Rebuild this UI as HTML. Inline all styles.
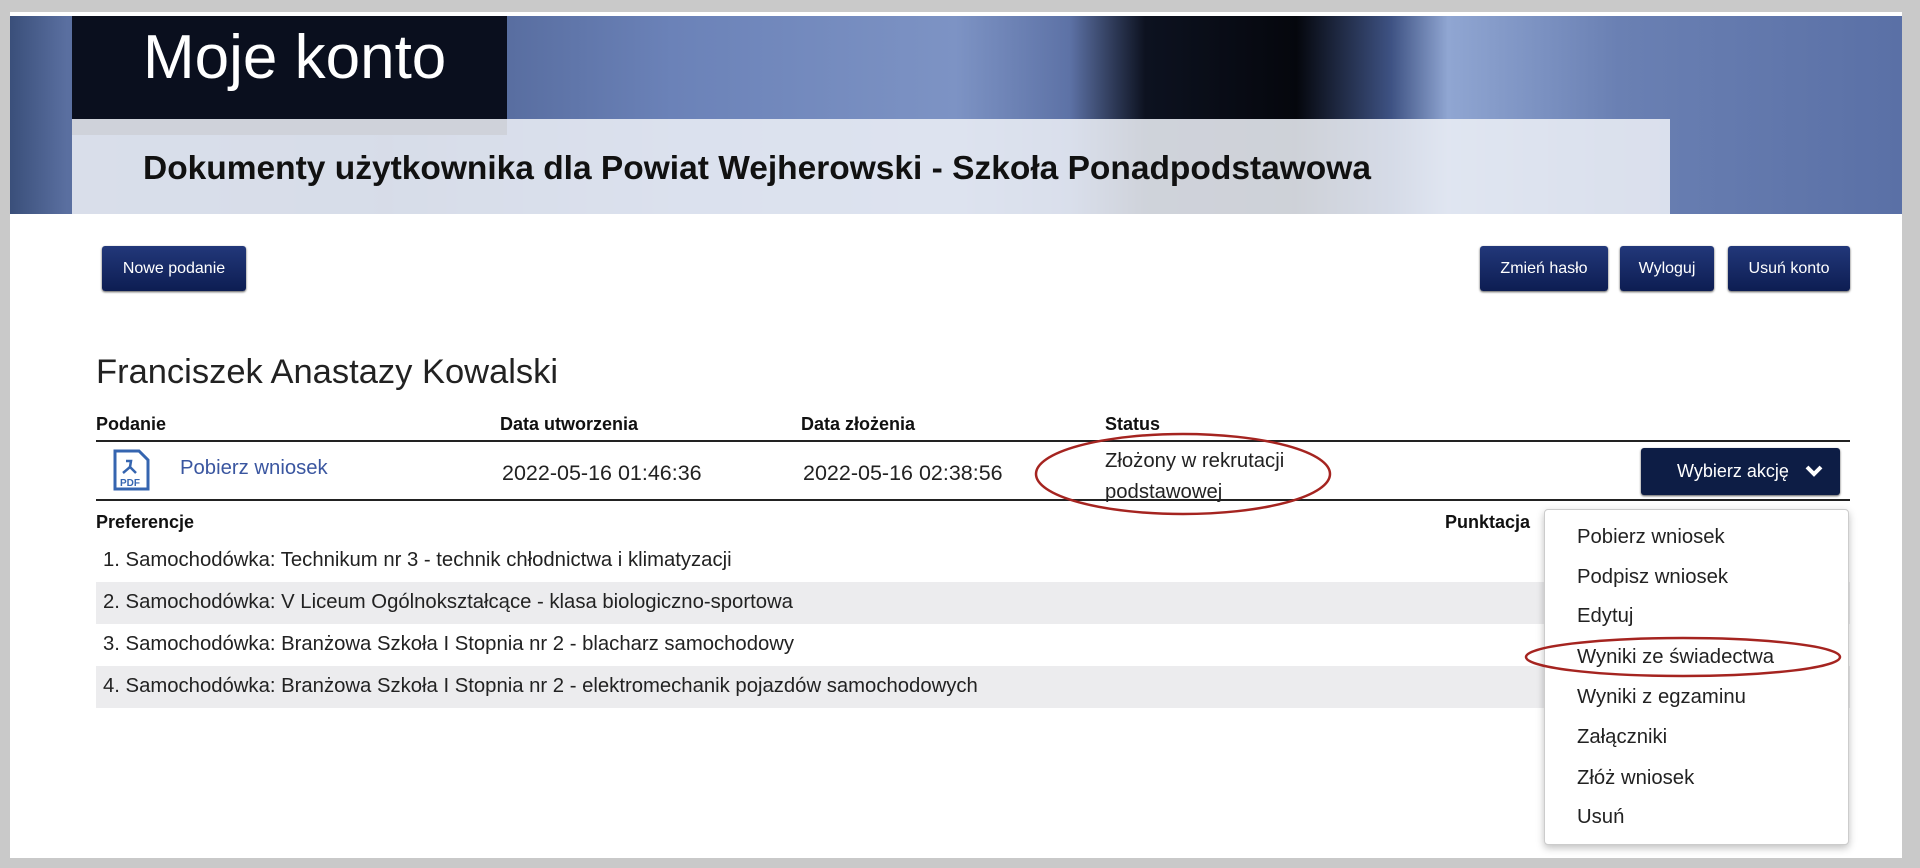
<!DOCTYPE html>
<html><head><meta charset="utf-8"><style>
*{margin:0;padding:0;box-sizing:border-box}
body{width:1920px;height:868px;background:#c9c9c9;font-family:"Liberation Sans",sans-serif;position:relative;overflow:hidden}
.abs{position:absolute}
#page{left:10px;top:12px;width:1892px;height:846px;background:#fff}
#hdr{left:10px;top:16px;width:1892px;height:198px;background:linear-gradient(90deg,#3a4f7a 0%,#5a6fa0 3%,#4b5f8f 20%,#6b82b8 35%,#7d93c4 50%,#5d72a6 56%,#0d1220 60%,#05070d 68%,#3e5283 73%,#90a6d2 76%,#6a80b3 85%,#5a70a6 100%)}
#dark{left:72px;top:16px;width:435px;height:119px;background:#0a0f1e}
#dark span{position:absolute;left:71px;top:6px;color:#fff;font-size:62px}
#light{left:72px;top:119px;width:1598px;height:95px;background:rgba(235,238,245,.88)}
#light span{position:absolute;left:71px;top:31px;font-size:33.5px;font-weight:bold;color:#111}
.btn{position:absolute;background:linear-gradient(#22387a,#0d1d52);color:#fff;font-size:16px;border-radius:3px;display:flex;align-items:center;justify-content:center;box-shadow:0 1px 2px #555}
.t{position:absolute;font-size:20.3px;color:#222;white-space:nowrap}
.b{font-weight:bold;font-size:18px;color:#111}
.line{position:absolute;left:96px;width:1754px;height:2px;background:#222}
.row{position:absolute;left:96px;width:1754px;height:42px}
.g{background:#ececee}
#dd{left:1544px;top:509px;width:305px;height:336px;background:#fff;border:1px solid #ccc;border-radius:4px;box-shadow:0 3px 8px rgba(0,0,0,.25)}
#dd div{position:absolute;left:32px;font-size:20.3px;color:#222}
</style></head><body>
<div id="page" class="abs"></div>
<div id="hdr" class="abs"></div>
<div id="dark" class="abs"><span>Moje konto</span></div>
<div id="light" class="abs"><span>Dokumenty użytkownika dla Powiat Wejherowski - Szkoła Ponadpodstawowa</span></div>
<div class="btn" style="left:102px;top:246px;width:144px;height:45px">Nowe podanie</div>
<div class="btn" style="left:1480px;top:246px;width:128px;height:45px">Zmień hasło</div>
<div class="btn" style="left:1620px;top:246px;width:94px;height:45px">Wyloguj</div>
<div class="btn" style="left:1728px;top:246px;width:122px;height:45px">Usuń konto</div>
<div class="t" style="left:96px;top:353px;font-size:34.5px;color:#222">Franciszek Anastazy Kowalski</div>
<div class="t b" style="left:96px;top:414px">Podanie</div>
<div class="t b" style="left:500px;top:414px">Data utworzenia</div>
<div class="t b" style="left:801px;top:414px">Data złożenia</div>
<div class="t b" style="left:1105px;top:414px">Status</div>
<div class="line" style="top:440px"></div>
<svg class="abs" style="left:113px;top:449px" width="38" height="42" viewBox="0 0 38 42"><path d="M2 2h24l9 9v29H2z" fill="#fff" stroke="#3565b0" stroke-width="3"/><path d="M13 12l5 0-1 6 6 6M17 18l-7 6" fill="none" stroke="#3565b0" stroke-width="2.5"/><text x="7" y="37" font-size="10" font-weight="bold" fill="#3565b0" font-family="Liberation Sans">PDF</text></svg>
<div class="t" style="left:180px;top:457px;color:#3a56a0">Pobierz wniosek</div>
<div class="t" style="left:502px;top:461px;font-size:21.5px">2022-05-16 01:46:36</div>
<div class="t" style="left:803px;top:461px;font-size:21.5px">2022-05-16 02:38:56</div>
<div class="t" style="left:1105px;top:446px;line-height:31px">Złożony w rekrutacji<br>podstawowej</div>
<div class="btn" style="left:1641px;top:448px;width:199px;height:47px;background:#0d1d45;font-size:18px;justify-content:flex-start;padding-left:36px">Wybierz akcję<svg style="position:absolute;left:164px;top:17px" width="18" height="13" viewBox="0 0 18 13"><path d="M2 2l7 7 7-7" fill="none" stroke="#fff" stroke-width="4"/></svg></div>
<div class="line" style="top:499px"></div>
<div class="t b" style="left:96px;top:512px">Preferencje</div>
<div class="t b" style="left:1445px;top:512px">Punktacja</div>
<div class="row" style="top:540px"></div>
<div class="row g" style="top:582px"></div>
<div class="row" style="top:624px"></div>
<div class="row g" style="top:666px"></div>
<div class="t" style="left:103px;top:549px">1. Samochodówka: Technikum nr 3 - technik chłodnictwa i klimatyzacji</div>
<div class="t" style="left:103px;top:591px">2. Samochodówka: V Liceum Ogólnokształcące - klasa biologiczno-sportowa</div>
<div class="t" style="left:103px;top:633px">3. Samochodówka: Branżowa Szkoła I Stopnia nr 2 - blacharz samochodowy</div>
<div class="t" style="left:103px;top:675px">4. Samochodówka: Branżowa Szkoła I Stopnia nr 2 - elektromechanik pojazdów samochodowych</div>
<div id="dd" class="abs">
<div style="top:16px">Pobierz wniosek</div>
<div style="top:56px">Podpisz wniosek</div>
<div style="top:95px">Edytuj</div>
<div style="top:136px">Wyniki ze świadectwa</div>
<div style="top:176px">Wyniki z egzaminu</div>
<div style="top:216px">Załączniki</div>
<div style="top:257px">Złóż wniosek</div>
<div style="top:296px">Usuń</div>
</div>
<svg class="abs" style="left:0;top:0" width="1920" height="868"><ellipse cx="1183" cy="474" rx="147" ry="40" fill="none" stroke="#a52420" stroke-width="2.5"/><ellipse cx="1683" cy="657" rx="157" ry="19" fill="none" stroke="#a52420" stroke-width="2.5"/></svg>
</body></html>
